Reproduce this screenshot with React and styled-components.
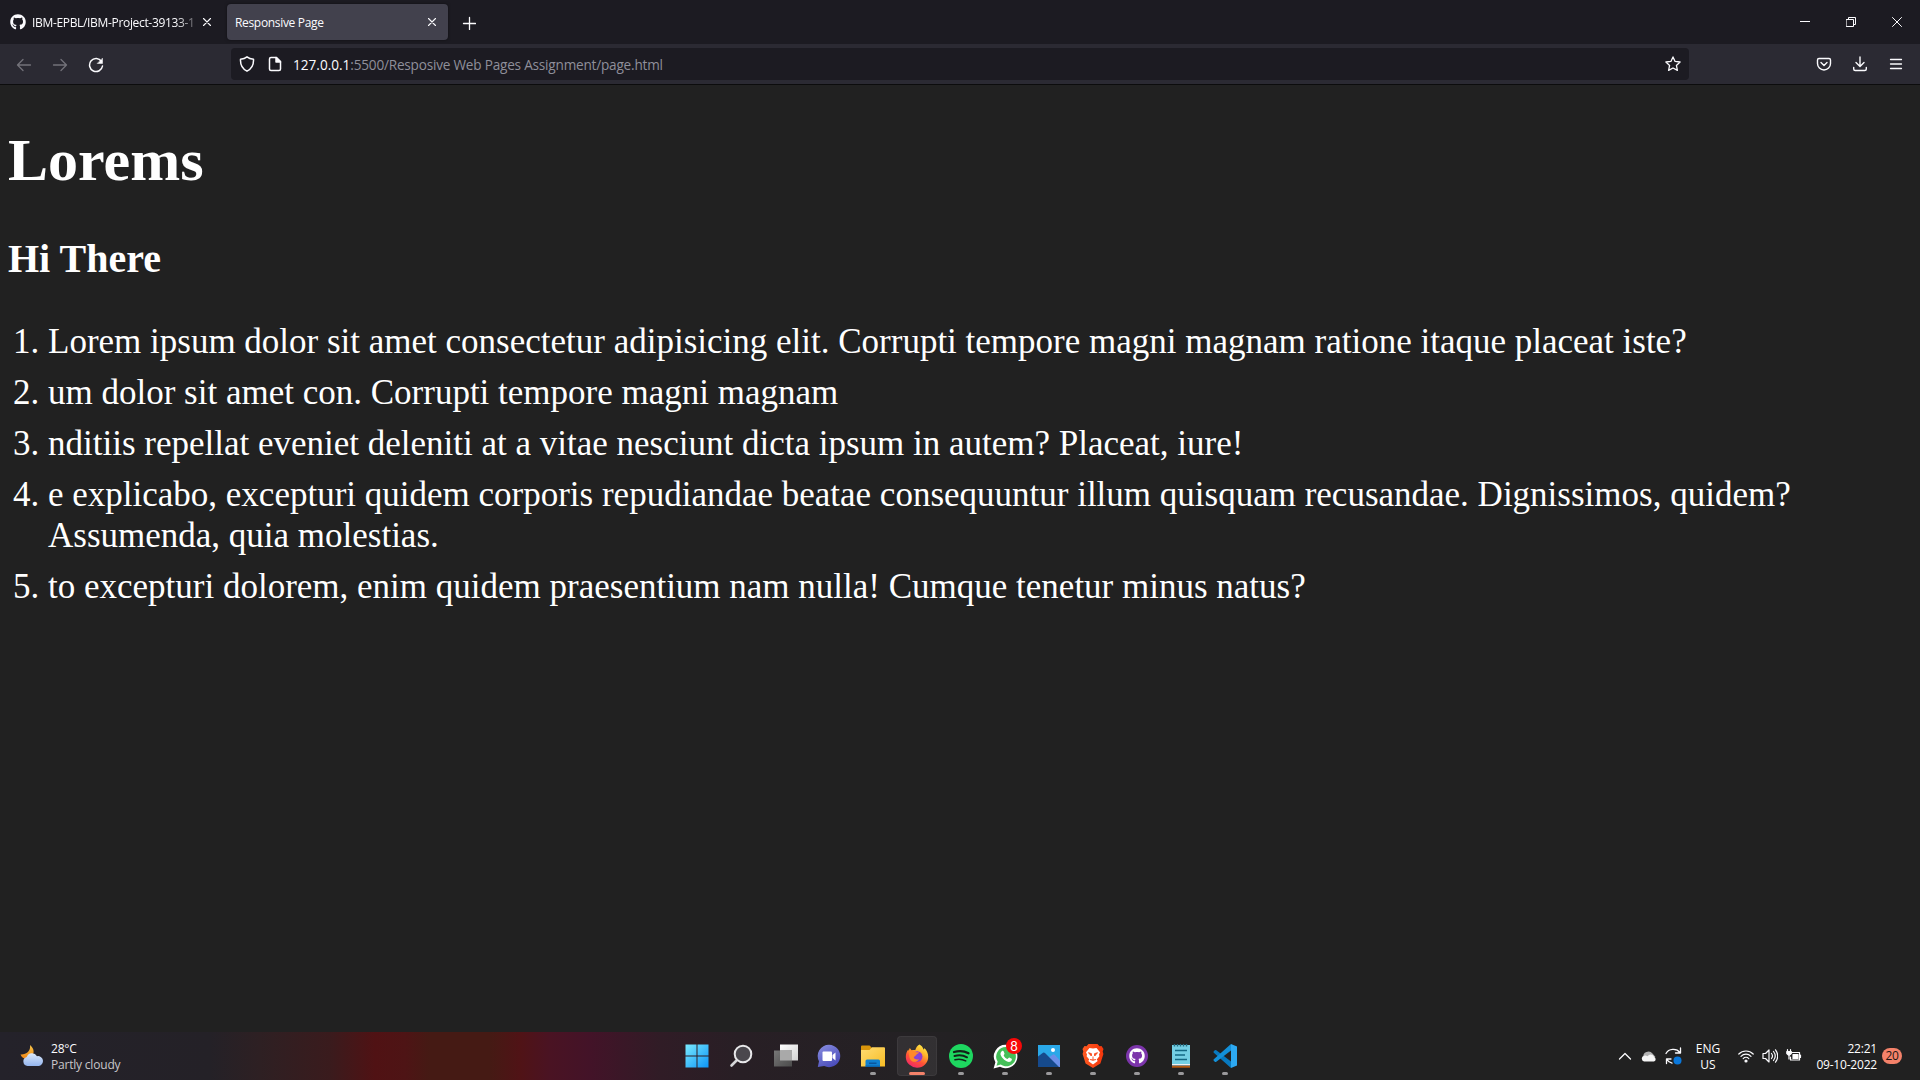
import React from "react";
import styled, { createGlobalStyle, css } from "styled-components";
import { FaGithub } from "react-icons/fa";

const Global = createGlobalStyle`
  html, body { margin: 0; background: #212121; }
  body { overflow: hidden; }
  * { box-sizing: border-box; }
`;

const Screen = styled.div`
  display: flex;
  flex-direction: column;
  width: 1920px;
  height: 1080px;
  background: #212121;
  font-family: "Open Sans", "Noto Sans", sans-serif;
  color: #fbfbfe;
  svg { display: block; flex: none; }
`;

/* ---------- browser chrome ---------- */
const TabBar = styled.header`
  display: flex;
  align-items: center;
  height: 44px;
  background: #1c1b22;
`;
const Tab = styled.div`
  display: flex;
  align-items: center;
  height: 36px;
  width: ${(p) => p.$width}px;
  margin-left: ${(p) => p.$gap || 0}px;
  padding: 0 11px 0 ${(p) => p.$pad}px;
  border-radius: 4px;
  background: ${(p) => (p.$active ? "#42414d" : "transparent")};
  box-shadow: ${(p) => (p.$active ? "0 0 3px rgba(0,0,0,.5)" : "none")};
`;
const TabTitle = styled.span`
  flex: 1;
  min-width: 0;
  padding-top: 2px;
  white-space: nowrap;
  margin-left: ${(p) => (p.$icon ? 6 : 0)}px;
  font-size: 12px;
  line-height: 18px;
  letter-spacing: -0.33px;
  ${(p) =>
    p.$fade &&
    css`
      mask-image: linear-gradient(to left, transparent, #000 26px);
    `}
`;
const NewTab = styled.div`
  padding: 1px 0 0 14px;
`;
const WindowButtons = styled.div`
  display: flex;
  margin-left: auto;
  > * { width: 46px; display: flex; justify-content: center; }
`;
const NavBar = styled.nav`
  display: flex;
  align-items: center;
  height: 41px;
  background: #2b2a33;
  border-bottom: 1px solid #0c0c0d;
`;
const NavButtons = styled.div`
  display: flex;
  align-items: center;
  gap: 20px;
  width: 231px;
  padding: 1px 0 0 16px;
`;
const UrlField = styled.div`
  display: flex;
  align-items: center;
  width: 1458px;
  height: 32px;
  padding: 0 8px;
  border-radius: 4px;
  background: #1c1b22;
`;
const SiteIcons = styled.div`
  display: flex;
  gap: 12px;
`;
const Url = styled.div`
  flex: 1;
  padding-top: 2px;
  margin-left: 10px;
  font-size: 13.6px;
  line-height: 20px;
  letter-spacing: -0.21px;
  color: #8f8f9a;
  b { font-weight: 400; letter-spacing: 0; color: #fbfbfe; }
`;
const Tools = styled.div`
  display: flex;
  align-items: center;
  gap: 16px;
  margin-left: auto;
  padding-right: 14px;
`;

/* ---------- page ---------- */
const Page = styled.main`
  flex: 1;
  padding: 0 8px;
  color: #fff;
  font-family: "Liberation Serif", "Times New Roman", serif;
`;
const Title = styled.h1`
  margin: 41px 0 0;
  font-size: 60px;
  line-height: 69px;
`;
const Subtitle = styled.h2`
  margin: 41px 0 0;
  font-size: 40px;
  line-height: 46px;
`;
const List = styled.ol`
  margin: 39px 0 0;
  padding: 0 0 0 40px;
  font-size: 35px;
  line-height: 41px;
`;
const Item = styled.li`
  padding-bottom: 10px;
`;

/* ---------- taskbar ---------- */
const Taskbar = styled.footer`
  display: grid;
  grid-template-columns: 674px 1fr auto;
  align-items: center;
  height: 48px;
  font-size: 12px;
  line-height: 16px;
  background: linear-gradient(90deg, #24222a 0, #242127 210px, #2e2023 260px, #3a1b1d 330px, #501214 375px, #4e1415 405px, #451a14 430px, #451a14 490px, #501316 520px, #4a1323 550px, #431328 590px, #301c26 660px, #281f25 740px, #242124 900px, #212121 1050px);
`;
const Weather = styled.div`
  display: flex;
  align-items: center;
  gap: 7px;
  padding-left: 19px;
`;
const WeatherText = styled.div`
  padding-top: 2px;
  letter-spacing: -0.2px;
  small { display: block; font-size: 12px; color: #c8c6ca; }
`;
const Apps = styled.div`
  display: flex;
  gap: 4px;
  padding-left: 3px;
`;
const AppSlot = styled.div`
  position: relative;
  display: flex;
  align-items: center;
  justify-content: center;
  width: 40px;
  height: 40px;
  border-radius: 4px;
  background: ${(p) => (p.$active ? "rgba(255,255,255,.07)" : "transparent")};
  box-shadow: ${(p) => (p.$active ? "inset 0 0 0 1px rgba(255,255,255,.05)" : "none")};
  &::after {
    content: "";
    position: absolute;
    bottom: 1px;
    left: 50%;
    transform: translateX(-50%);
    width: ${(p) => (p.$active ? 16 : 6)}px;
    height: 3px;
    border-radius: 2px;
    background: ${(p) => (p.$active ? "#f4826a" : p.$running ? "#9a999b" : "transparent")};
  }
`;
const Badge = styled.span`
  position: absolute;
  top: 2px;
  right: 3px;
  width: 16px;
  height: 16px;
  border-radius: 50%;
  background: #f80808;
  font-family: Lato, sans-serif;
  font-size: 13px;
  line-height: 16px;
  text-align: center;
  color: #fff;
`;
const Tray = styled.div`
  display: flex;
  align-items: center;
  padding-right: 18px;
`;
const TrayIcons = styled.div`
  display: flex;
  align-items: center;
  gap: 8px;
`;
const TrayText = styled.div`
  width: ${(p) => p.$width}px;
  margin-right: ${(p) => p.$after || 0}px;
  padding-top: ${(p) => p.$drop || 0}px;
  text-align: ${(p) => p.$align};
  letter-spacing: ${(p) => p.$track || 0}px;
  white-space: nowrap;
  color: #fff;
`;
const Count = styled.span`
  width: 20px;
  height: 16px;
  margin-left: 5px;
  border-radius: 8px;
  background: #f4826a;
  color: #1d1614;
  font-size: 12px;
  letter-spacing: -0.4px;
  text-align: center;
`;

const Line = ({ w = 16, h = w, box, width = 1.3, color = "#fbfbfe", children }) => (
  <svg width={w} height={h} viewBox={box || `0 0 ${w} ${h}`} fill="none" stroke={color} strokeWidth={width} strokeLinecap="round" strokeLinejoin="round">
    {children}
  </svg>
);
const Cross = () => <Line w={10} width={1.1}><path d="M1.5 1.5l7 7M8.5 1.5l-7 7" /></Line>;

const Moon = () => (
  <svg width="25" height="24" viewBox="0 0 25 24">
    <defs>
      <linearGradient id="cloud" x2="0" y2="1"><stop stopColor="#dbe8fb" /><stop offset="1" stopColor="#94b5ee" /></linearGradient>
      <linearGradient id="moon" x2="0" y2="1"><stop stopColor="#f8c64a" /><stop offset="1" stopColor="#ef8414" /></linearGradient>
    </defs>
    <path d="M11 1c4.500 3.500 5 9 .5 12.500C7 16 3.500 15 1.500 10.500 7 11 12 7 11 1z" fill="url(#moon)" />
    <path d="M8.500 22a4.600 4.600 0 0 1-.8-9 5.700 5.700 0 0 1 10.300-.8A5 5 0 0 1 20 22z" fill="url(#cloud)" />
  </svg>
);
const Windows = () => (
  <svg width="24" height="24" viewBox="0 0 24 24">
    <defs><linearGradient id="win" gradientUnits="userSpaceOnUse" x1="0" y1="0" x2="24" y2="24"><stop stopColor="#7cecff" /><stop offset="1" stopColor="#0a92f5" /></linearGradient></defs>
    <path d="M.5.5h11v11H.5zM12.500.5h11v11h-11zM.5 12.500h11v11H.5zM12.500 12.500h11v11h-11z" fill="url(#win)" />
  </svg>
);
const Search = () => (
  <svg width="24" height="24" viewBox="0 0 24 24" fill="none" strokeLinecap="round">
    <path d="M8 16l-5.500 5.500" stroke="#d6d6d8" strokeWidth="2.600" />
    <circle cx="14" cy="10" r="8.300" fill="#4a474d" stroke="#e8e8ea" strokeWidth="2" />
  </svg>
);
const TaskView = () => (
  <svg width="25" height="24" viewBox="0 0 25 24">
    <defs>
      <linearGradient id="tvA" x2="1" y2="1"><stop stopColor="#fff" /><stop offset="1" stopColor="#d2d2d2" /></linearGradient>
      <linearGradient id="tvB" x2="1" y2="1"><stop stopColor="#777" /><stop offset="1" stopColor="#4b4b4b" /></linearGradient>
    </defs>
    <path d="M7 .5h18v16H7z" fill="url(#tvA)" />
    <path d="M1 6.500h18v16H1z" fill="url(#tvB)" />
    <path d="M7 6.500h12v10H7z" fill="#a9a9a9" />
  </svg>
);
const Chat = () => (
  <svg width="24" height="24" viewBox="0 0 24 24">
    <defs><linearGradient id="chat" x2=".6" y2="1"><stop stopColor="#8a8fe0" /><stop offset="1" stopColor="#4b4dbb" /></linearGradient></defs>
    <path d="M12 .8a11.200 11.200 0 1 1-4.800 21.300L.8 23.100 2 17.300A11.200 11.200 0 0 1 12 .8z" fill="url(#chat)" />
    <rect x="5.500" y="7.500" width="9.500" height="9.500" rx="1" fill="#fff" />
    <path d="M15.500 11l3-2.500v8l-3-2.500z" fill="#fff" />
  </svg>
);
const Folder = () => (
  <svg width="24" height="24" viewBox="0 0 24 24">
    <defs><linearGradient id="fold" x2="1" y2="1"><stop stopColor="#ffdc73" /><stop offset="1" stopColor="#f7bc24" /></linearGradient></defs>
    <path d="M0 2.500Q0 1.500 1 1.500h7.500l2 1.800V8H0z" fill="#d9950b" />
    <path d="M0 6h8.500l2.500-2.700h12q1 0 1 1V22.500H0z" fill="url(#fold)" />
    <path d="M4.500 22.500V17q0-1.500 1.500-1.500h11.500q1.500 0 1.500 1.500v5.500z" fill="#0f80d0" />
    <path d="M8 18.500h7.500v1.500H8z" fill="#0a569d" /><path d="M4.500 21.500h14.500v1.500H4.500z" fill="#0a64ad" />
  </svg>
);
const Firefox = () => (
  <svg width="24" height="24" viewBox="0 0 24 24">
    <defs>
      <linearGradient id="ffA" x1=".8" y1="0" x2=".25" y2="1"><stop stopColor="#fff04a" /><stop offset=".35" stopColor="#ffb02a" /><stop offset=".65" stopColor="#ff5236" /><stop offset="1" stopColor="#f0246c" /></linearGradient>
      <radialGradient id="ffB"><stop stopColor="#7b4be0" /><stop offset="1" stopColor="#9a38c8" /></radialGradient>
    </defs>
    <path d="M14.500.5c2 1 3.500 2.800 4 5 .6-.1.800-.8.800-1.500 2.500 2.200 3.900 5.300 3.900 8.700a11.200 10.800 0 0 1-22.400.3c0-3.500 1.200-6.200 2.600-7.500l.2 1.600 1.200-3.100 1.900 2.500c1.300-.5 2.500-.5 3.500-.2.800-2.600 2-4.600 4.300-5.800z" fill="url(#ffA)" />
    <circle cx="12.300" cy="12.500" r="5.200" fill="url(#ffB)" />
    <path d="M4.500 7c2.500-1.500 5-.5 6.500 1.200h3c-.3 1.700-2.500 1.700-3 2.800-.3 1.300-1.800 1.300-2.300 2.300.7 2.300 3.800 2.700 5.300 1.700-1.300 3.500-7 4-9 0C4 12.500 3.800 9.500 4.500 7z" fill="#ff8a2a" />
  </svg>
);
const WhatsApp = () => (
  <svg width="25" height="25" viewBox="0 0 25 25">
    <path d="M13 .8A11.700 11.700 0 1 1 7 22.700L.6 24.500l1.800-6.200A11.700 11.700 0 0 1 13 .8z" fill="#fff" />
    <path d="M13 2.900a9.700 9.700 0 1 1-5.300 17.700l-4.200 1.200 1.200-4A9.700 9.700 0 0 1 13 2.900z" fill="#44bf58" />
    <path d="M9 7c.8-.5 1.300-.3 1.600.3l.9 2.200c.2.500-.9 1.500-.8 1.900.8 1.700 2 2.800 3.800 3.500.5.100 1.200-1.400 1.700-1.300l2.500 1.200c.6.500-.1 2.500-1.700 3-3.200.8-8-3.100-9.300-6.700C7 9.500 8 7.700 9 7z" fill="#fff" />
  </svg>
);
const Photos = () => (
  <svg width="24" height="24" viewBox="0 0 24 24">
    <path d="M1 1h22v22H1z" fill="#2aa8e8" />
    <path d="M11 14l5-3.500q1-.5 2 .5l5 5.500V23H15z" fill="#6a8fe8" />
    <path d="M1 12.500l5-3.700q1-.5 2 .3L22 23H1z" fill="#164a8c" />
    <circle cx="16" cy="6" r="2" fill="#fff" />
  </svg>
);
const Brave = () => (
  <svg width="24" height="24" viewBox="0 0 24 24">
    <defs><linearGradient id="brave"><stop stopColor="#ff5a22" /><stop offset="1" stopColor="#f4360b" /></linearGradient></defs>
    <path d="M7.500 0h9l2 2.300 2-.2 2 3-.8 2.400.7 2.500-3 9.500L12 24l-7.400-4.500L1.600 10 2.300 7.500 1.500 5.100l2-3 2 .2z" fill="url(#brave)" />
    <path d="M12 4.500l3.500-.6L19 8.200l-1 2.200.4 1.800-2.700 3.300 1 1.600-4.700 3.300-4.700-3.300 1-1.600-2.700-3.300.4-1.800-1-2.200 3.500-4.300z" fill="#fff" />
    <path d="M7.500 8.700l3 1-.2 2.300zM16.500 8.700l-3 1 .2 2.300zM12 12.500v3M9 15.500l3 .8 3-.8" fill="#f8481a" stroke="#f8481a" strokeWidth=".9" />
  </svg>
);
const GithubDesktop = styled.div`
  display: grid;
  place-items: center;
  width: 22px;
  height: 22px;
  border-radius: 50%;
  background: #7c35ab;
  color: #fff;
`;
const Spotify = () => (
  <svg width="24" height="24" viewBox="0 0 24 24" fill="none" stroke="#132018" strokeLinecap="round">
    <circle cx="12" cy="12" r="12" fill="#1ed760" stroke="none" />
    <path d="M5 8c5-1.500 10.500-1 14.500 1.300" strokeWidth="2.300" />
    <path d="M5.500 12c4.500-1.300 8.800-.8 12.500 1.300" strokeWidth="2" />
    <path d="M6 15.700c4-1 7.500-.5 10.700 1.200" strokeWidth="1.600" />
  </svg>
);
const Notepad = () => (
  <svg width="24" height="24" viewBox="0 0 24 24">
    <path d="M3 1h18v20H3z" fill="#74cfe4" /><path d="M3 20h18v1.500H3z" fill="#f1f1ef" /><path d="M3 22h18v1.700H3z" fill="#b65a10" />
    <path d="M5.500 0v2.500M8.500 0v2.500M11.500 0v2.500M14.500 0v2.500M17.500 0v2.500" stroke="#246e83" strokeWidth="1.400" />
    <path d="M6 6.500h12M6 11h10M6 15.500h12" stroke="#146984" strokeWidth="1.500" />
  </svg>
);
const Code = () => (
  <svg width="24" height="24" viewBox="0 0 24 24">
    <path d="M18 24L.8 8.800q-.8-.8 0-1.600l1-1q.7-.6 1.500 0L18 17.500z" fill="#0879bf" />
    <path d="M18 0L.8 15.300q-.8.800 0 1.500l1 1q.7.600 1.500 0L18 6.500z" fill="#1390d8" />
    <path d="M18 0l6 2.500v19L18 24z" fill="#2da9f2" />
  </svg>
);

const apps = [
  { icon: <Windows /> },
  { icon: <Search /> },
  { icon: <TaskView /> },
  { icon: <Chat /> },
  { icon: <Folder />, running: true },
  { icon: <Firefox />, active: true },
  { icon: <Spotify />, running: true },
  { icon: <WhatsApp />, running: true, badge: "8" },
  { icon: <Photos />, running: true },
  { icon: <Brave />, running: true },
  { icon: <GithubDesktop><FaGithub size={16} /></GithubDesktop>, running: true },
  { icon: <Notepad />, running: true },
  { icon: <Code />, running: true },
];

const items = [
  "Lorem ipsum dolor sit amet consectetur adipisicing elit. Corrupti tempore magni magnam ratione itaque placeat iste?",
  "um dolor sit amet con. Corrupti tempore magni magnam",
  "nditiis repellat eveniet deleniti at a vitae nesciunt dicta ipsum in autem? Placeat, iure!",
  "e explicabo, excepturi quidem corporis repudiandae beatae consequuntur illum quisquam recusandae. Dignissimos, quidem? Assumenda, quia molestias.",
  "to excepturi dolorem, enim quidem praesentium nam nulla! Cumque tenetur minus natus?",
];

export default function App() {
  return (
    <Screen>
      <Global />
      <TabBar>
        <Tab $width={223} $pad={10}>
          <FaGithub size={16} />
          <TabTitle $icon $fade>IBM-EPBL/IBM-Project-39133-1</TabTitle>
          <Cross />
        </Tab>
        <Tab $width={221} $gap={4} $pad={8} $active>
          <TabTitle>Responsive Page</TabTitle>
          <Cross />
        </Tab>
        <NewTab><Line w={14}><path d="M7.500 1.500v12M1.500 7.500h12" /></Line></NewTab>
        <WindowButtons>
          <div><Line w={10} width={1}><path d="M0 4.500h10" strokeLinecap="butt" /></Line></div>
          <div><Line w={10} width={1}><path d="M.5 2.500h7v7h-7zM2.500 2.500v-2h7v7h-2" strokeLinejoin="miter" /></Line></div>
          <div><Line w={10} width={1}><path d="M.5.5l9 9M9.500.5l-9 9" /></Line></div>
        </WindowButtons>
      </TabBar>
      <NavBar>
        <NavButtons>
          <Line color="#73727a"><path d="M14.500 8H1.500M7 2.500L1.500 8 7 13.500" /></Line>
          <Line color="#73727a"><path d="M1.500 8h13M9 2.500L14.500 8 9 13.500" /></Line>
          <Line width={1.5}><path d="M13.500 4.500A6.500 6.500 0 1 0 14.500 9" /><path d="M14.500 1.500v5h-5z" fill="#fbfbfe" strokeWidth=".5" /></Line>
        </NavButtons>
        <UrlField>
          <SiteIcons>
            <Line width={1.5}><path d="M8 .8c1.800 1.400 4.200 2.100 6.500 2.400.3 5.300-1.500 9.500-6.500 12C3 12.700 1.200 8.500 1.500 3.200 3.800 2.900 6.200 2.200 8 .8z" /></Line>
            <Line width={1.5}><path d="M4 1.500h5.500l4 4V13q0 1.500-1.500 1.500H4q-1.500 0-1.500-1.500V3Q2.500 1.500 4 1.500z" /><path d="M9 1.500v4.500h4.500z" fill="#fbfbfe" /></Line>
          </SiteIcons>
          <Url><b>127.0.0.1</b>:5500/Resposive Web Pages Assignment/page.html</Url>
          <Line><path d="M8 .9l2.100 4.500 5 .6-3.700 3.400 1 5L8 12l-4.400 2.400 1-5L.9 6l5-.6z" /></Line>
        </UrlField>
        <Tools>
          <Line w={20} box="-2 -2 20 20" width={1.4}><path d="M3 2.500h10q1.500 0 1.500 1.500v3.500a6.500 6.500 0 0 1-13 0V4Q1.500 2.500 3 2.500zM5 6.500l3 3 3-3" /></Line>
          <Line w={20} box="-2 -2 20 20" width={1.4}><path d="M8 1v9M4 6.500L8 10.500l4-4M1.700 11.500V13q0 1.500 1.500 1.500h9.600q1.500 0 1.500-1.500v-1.500" /></Line>
          <Line w={20} box="-2 -2 20 20" width={1.3}><path d="M2.500 3.500h11M2.500 8h11M2.500 12.500h11" /></Line>
        </Tools>
      </NavBar>
      <Page>
        <Title>Lorems</Title>
        <Subtitle>Hi There</Subtitle>
        <List>{items.map((t) => <Item key={t}>{t}</Item>)}</List>
      </Page>
      <Taskbar>
        <Weather>
          <Moon />
          <WeatherText>28°C<small>Partly cloudy</small></WeatherText>
        </Weather>
        <Apps>
          {apps.map((a, i) => (
            <AppSlot key={i} $active={a.active} $running={a.running}>
              {a.icon}
              {a.badge && <Badge>{a.badge}</Badge>}
            </AppSlot>
          ))}
        </Apps>
        <Tray>
          <TrayIcons>
            <Line w={14}><path d="M1.500 10L7 4.500l5.500 5.500" /></Line>
            <svg width="17" height="12" viewBox="0 0 16 12">
              <path d="M3 7a5 4.500 0 0 1 9-3.500L15 7z" fill="#b2b2b2" />
              <path d="M3.500 11.500a3 3 0 0 1 0-5.800q2-.5 3.500.5 2-2.500 5-1.200 1 .6 1.500 1.800a2.500 2.500 0 0 1 0 4.700z" fill="#f5f5f5" />
            </svg>
            <Line w={17} h={18}><path d="M1 6.500A8 7 0 0 1 15 5.500M15.500 1v5h-5M1.500 16.500v-4.500h4.500M2 12.500q1.500 3 5 3.700" /><circle cx="12.500" cy="13.500" r="4" fill="#0a78dc" stroke="none" /></Line>
          </TrayIcons>
          <TrayText $width={52} $after={4} $drop={2} $align="center">ENG<br />US</TrayText>
          <TrayIcons>
            <Line w={16} width={1.2}><path d="M.8 6a10.200 10.200 0 0 1 14.400 0M3 8.300a7 7 0 0 1 10 0M5.200 10.600a4 4 0 0 1 5.600 0" /><circle cx="8" cy="13" r="1" fill="#fff" /></Line>
            <Line w={16} width={1.2}><path d="M1 5.500h2.500L7 2v12l-3.500-3.500H1zM9.500 5.500q2 2.500 0 5M11.500 3.500q3.500 4.500 0 9M13.500 1.800q4.500 6.200 0 12.400" /></Line>
            <Line w={16} width={1.2}><path d="M5 4.500h8.500V12H4.500V9" /><path d="M7 6.500h5v4H7zM14.500 7v2.500" fill="#fff" /><path d="M1.500 1.500v2M4.500 1.500v2M.8 3.500h4.500v2L3 7.500.8 5.500zM3 7.500V11" fill="#fff" /></Line>
          </TrayIcons>
          <TrayText $width={75} $drop={1} $align="right" $track={-0.2}>22:21<br />09-10-2022</TrayText>
          <Count>20</Count>
        </Tray>
      </Taskbar>
    </Screen>
  );
}
